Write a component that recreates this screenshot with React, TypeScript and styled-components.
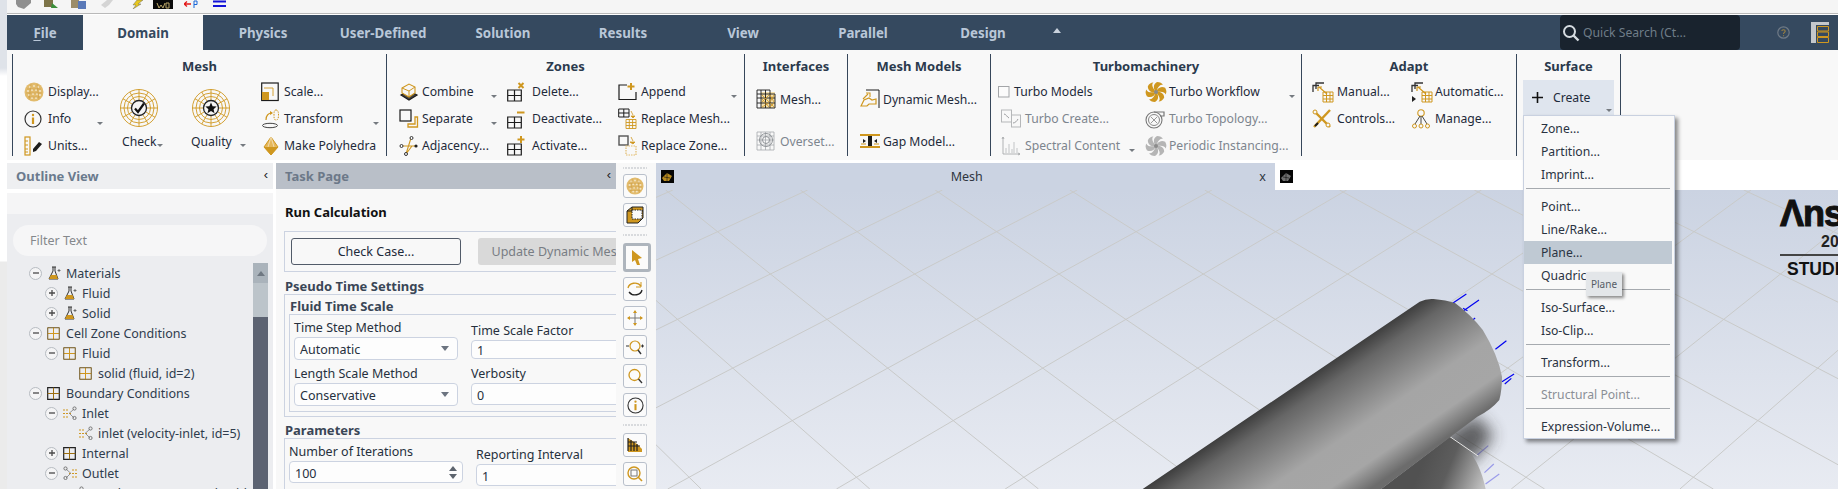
import React from 'react';
import styled, { createGlobalStyle } from 'styled-components';

const GOLD = '#cf971f';
const INK = '#1c1c1c';
const FONT = '"Noto Sans", "Open Sans", "Liberation Sans", sans-serif';

const Global = createGlobalStyle`
  html, body { margin: 0; padding: 0; width: 1838px; height: 489px; overflow: hidden; background: #fff; }
  body { font-family: ${FONT}; }
  #root { width: 1838px; height: 489px; }
`;

const Page = styled.div`
  display: flex; width: 1838px; height: 489px; overflow: hidden; background: #fff;
`;
const Rail = styled.div`
  flex: 0 0 7px;
  background: linear-gradient(180deg, #dfe3e9 0, #dfe3e9 68px, #fff 76px, #fff 261px, #ebebeb 262px, #ebebeb 100%);
`;
const Main = styled.div`
  flex: 1; min-width: 0; display: flex; flex-direction: column;
`;
const QuickBar = styled.div`
  flex: 0 0 13px; height: 13px; background: #f5f5f5; border-bottom: 1px solid #b9b9b9; box-sizing: content-box;
  display: flex; align-items: flex-start; overflow: hidden; padding-left: 9px; gap: 12px; margin-bottom: 1px;
`;
const QuickIcon = styled.svg<{ $ml?: number }>`
  flex: none; margin-left: ${p => p.$ml ?? 0}px;
`;
const TabBar = styled.div`
  flex: 0 0 35px; display: flex; align-items: stretch; background: #35495f;
`;
const Tab = styled.div<{ $active?: boolean; $w?: number }>`
  flex: 0 0 ${p => p.$w ?? 120}px; display: flex; align-items: center; justify-content: center;
  font-size: 13.3px; font-weight: 700; padding-top: ${p => (p.$active ? 0 : 1)}px;
  color: ${p => (p.$active ? '#35495f' : '#b9c7d8')};
  background: ${p => (p.$active ? '#f8f8f8' : 'transparent')};
  u { text-underline-offset: 2px; }
`;
const Collapse = styled.div`
  width: 0; height: 0; margin: 13px 0 0 10px;
  border-left: 4px solid transparent; border-right: 4px solid transparent; border-bottom: 5px solid #c9d2dd;
`;
const Search = styled.div`
  margin-left: 499px; flex: 0 0 180px; background: #19232e; border-radius: 4px;
  display: flex; align-items: center; gap: 3px; padding-left: 2px; box-sizing: border-box;
  font-size: 12.2px; color: #6f7d88;
`;
const TabEnd = styled.div`
  margin-left: 37px; display: flex; align-items: center; gap: 21px;
`;

const Ribbon = styled.div`
  flex: 0 0 110px; height: 110px; box-sizing: border-box; background: #f8f8f8;
  padding: 4px 0 4px 5px; display: flex;
`;
const Group = styled.div<{ $w: number; $last?: boolean }>`
  flex: 0 0 ${p => p.$w}px; min-width: 0; box-sizing: border-box; height: 102px;
  border-left: 1px solid #36465a;
  border-right: ${p => (p.$last ? '1px solid #36465a' : '0')};
  display: flex; flex-direction: column;
`;
const GroupTitle = styled.div`
  flex: 0 0 24px; text-align: center; font-size: 13px; font-weight: 700; color: #2b3a4d; line-height: 24px;
`;
const Cols = styled.div`
  display: flex; align-items: flex-start;
`;
const Col = styled.div<{ $ml: number; $w: number; $row?: number }>`
  flex: 0 0 ${p => p.$w}px; min-width: 0; margin-left: ${p => p.$ml}px; display: flex; flex-direction: column;
  --row: ${p => p.$row ?? 27}px;
`;
const Item = styled.div<{ $off?: boolean }>`
  height: var(--row); display: flex; align-items: center; white-space: nowrap;
  font-size: 12.2px; color: ${p => (p.$off ? '#7d858e' : '#1e2a3a')};
`;
const Slot = styled.span<{ $w?: number; $inset?: number }>`
  flex: 0 0 ${p => p.$w ?? 24}px; padding-left: ${p => p.$inset ?? 0}px; box-sizing: border-box;
  display: flex; align-items: center;
`;
const Caret = styled.span<{ $ml?: number }>`
  margin-left: ${p => (p.$ml !== undefined ? `${p.$ml}px` : 'auto')}; margin-top: 9px; flex: none; width: 0; height: 0;
  border-left: 3.5px solid transparent; border-right: 3.5px solid transparent; border-top: 3.5px solid #757a80;
`;
const Big = styled.div<{ $ml: number }>`
  flex: 0 0 38px; min-width: 0; width: 38px; margin-left: ${p => p.$ml}px; padding-top: 11px; display: flex; flex-direction: column;
`;
const BigLabel = styled.div<{ $ml: number }>`
  margin: 5px 0 0 ${p => p.$ml}px; height: 18px; display: flex; align-items: center; white-space: nowrap;
  font-size: 12.2px; color: #1e2a3a;
`;
const Create = styled.div`
  position: relative; margin: 2px 0 0 6px; flex: 0 0 91px; height: 35px; background: #dfe5ee;
  display: flex; align-items: center; font-size: 12.2px; color: #1e2a3a;
  padding-left: 9px; box-sizing: border-box; gap: 10px;
`;
const CreateCaret = styled.span`
  position: absolute; right: 2px; bottom: 3px; width: 0; height: 0;
  border-left: 3.5px solid transparent; border-right: 3.5px solid transparent; border-top: 3.5px solid #757a80;
`;
const Menu = styled.div`
  position: absolute; left: 0; top: 100%; width: 152px; box-sizing: border-box; z-index: 5;
  background: #f9f9f9; border: 1px solid #c9d1e0; padding-top: 1px;
  box-shadow: 3px 3px 4px rgba(0,0,0,.45);
`;
const MenuItem = styled.div<{ $hi?: boolean; $off?: boolean }>`
  height: 23px; line-height: 23px; padding-left: 17px; margin-right: 2px; font-size: 12.2px;
  color: ${p => (p.$off ? '#8a8f96' : '#2a3342')};
  background: ${p => (p.$hi ? '#bfc9d3' : 'transparent')};
`;
const MenuSep = styled.div`
  height: 1px; margin: 2px 4px 6px 2px; background: #a6aaaf;
`;
const Tip = styled.div`
  position: absolute; left: 62px; top: 156px; width: 36px; height: 24px; line-height: 24px; text-align: center;
  background: #e3e6e9; font-size: 10px; color: #555c66; box-shadow: 2px 2px 3px rgba(0,0,0,.45);
`;

const Workspace = styled.div`
  flex: 1; min-height: 0; margin-top: 3px; display: flex; overflow: hidden;
`;
const Outline = styled.div`
  flex: 0 0 266px; display: flex; flex-direction: column; overflow: hidden;
`;
const PaneHead = styled.div<{ $bg: string; $fg: string }>`
  flex: 0 0 26px; height: 26px; display: flex; align-items: center; justify-content: space-between;
  background: ${p => p.$bg}; color: ${p => p.$fg}; font-size: 13px; font-weight: 700; padding: 0 5px 0 9px;
`;
const Chev = styled.span`
  font-size: 13px; font-weight: 400; color: #222; line-height: 1; margin-top: -4px; font-family: "Liberation Sans", sans-serif;
`;
const HeadGap = styled.div`
  flex: 0 0 4px; background: #fff;
`;
const PaleBand = styled.div`
  flex: 0 0 21px; background: #f5f5f6;
`;
const OutlineBody = styled.div`
  flex: 1; min-height: 0; background: #ecedf0; display: flex; flex-direction: column;
`;
const FilterWrap = styled.div`
  flex: 0 0 49px; padding: 11px 6px 7px; box-sizing: border-box;
`;
const Filter = styled.div`
  height: 31px; border-radius: 16px; background: #f6f6f7; color: #85888c; font-size: 12.5px;
  line-height: 32px; padding-left: 17px;
`;
const TreeWrap = styled.div`
  flex: 1; min-height: 0; display: flex; padding-right: 5px;
`;
const Tree = styled.div`
  flex: 1; min-width: 0; overflow: hidden; padding-top: 0;
`;
const Row = styled.div<{ $lvl: number }>`
  height: 20px; display: flex; align-items: center; padding-left: ${p => 22 + p.$lvl * 16}px; white-space: nowrap;
  font-size: 12.5px; color: #2f3c4d;
`;
const Toggle = styled.span`
  flex: 0 0 13px; width: 13px; height: 13px; box-sizing: border-box; border-radius: 50%; border: 1.5px solid #b7bcc2;
  background: #f4f4f5; margin-right: 5px; display: flex; align-items: center; justify-content: center;
`;
const NodeIcon = styled.span`
  flex: 0 0 19px; display: flex; align-items: center;
`;
const NoToggle = styled.span`
  flex: 0 0 18px;
`;
const Scroll = styled.div`
  flex: 0 0 15px; display: flex; flex-direction: column; background: #5c6372;
`;
const ScrollUp = styled.div`
  flex: 0 0 20px; background: #aab3bb; display: flex; align-items: center; justify-content: center;
`;
const Thumb = styled.div`
  flex: 0 0 34px; background: #bcc4ca;
`;
const Up = styled.span`
  width: 0; height: 0; border-left: 4px solid transparent; border-right: 4px solid transparent; border-bottom: 5px solid #6f7882;
`;

const Task = styled.div`
  flex: 0 0 340px; margin-left: 3px; display: flex; flex-direction: column; background: #f8f8f8; overflow: hidden;
`;
const TaskBody = styled.div`
  flex: 1; padding: 0 0 0 8px; font-size: 12.5px; color: #26303d; overflow: hidden; width: 500px;
`;
const Heading = styled.div`
  font-weight: 700; font-size: 13px; color: #111; height: 18px; line-height: 20px; margin: 13px 0 11px 1px;
`;
const ButtonBox = styled.div`
  height: 41px; box-sizing: border-box; border: 1px solid #ccd3e1; display: flex; align-items: center; gap: 17px; padding-left: 6px;
`;
const CheckBtn = styled.div`
  flex: 0 0 170px; height: 27px; box-sizing: border-box; border: 1px solid #525b69; border-radius: 3px;
  display: flex; align-items: center; justify-content: center; color: #1e2a3a;
`;
const GreyBtn = styled.div`
  flex: 0 0 170px; height: 27px; background: #d9d9d9; border-radius: 3px; color: #787d84;
  display: flex; align-items: center; justify-content: center; white-space: nowrap;
`;
const Sub = styled.div<{ $h: number; $lh: number }>`
  font-weight: 700; font-size: 13px; color: #3a4656; height: ${p => p.$h}px; line-height: ${p => p.$lh}px; margin-left: 1px;
`;
const Frame = styled.div<{ $p?: string }>`
  border: 1px solid #ccd3e1; padding: ${p => p.$p ?? '0'}; box-sizing: border-box;
`;
const FieldGrid = styled.div<{ $c: number }>`
  display: grid; grid-template-columns: ${p => p.$c}px 1fr; column-gap: 13px;
`;
const Field = styled.div<{ $h: number }>`
  display: flex; flex-direction: column; justify-content: flex-end; height: ${p => p.$h}px;
`;
const FieldLabel = styled.div`
  height: 20px; line-height: 22px; white-space: nowrap;
`;
const Input = styled.div<{ $h: number; $mb?: number }>`
  height: ${p => p.$h}px; margin-bottom: ${p => p.$mb ?? 0}px; box-sizing: border-box; border: 1px solid #ccd3e1; border-radius: 4px; background: #fdfdfd;
  display: flex; align-items: center; padding: 2px 5px 0; justify-content: space-between; white-space: nowrap;
`;
const SelArrow = styled.span`
  width: 0; height: 0; margin: -3px 3px 0 0; border-left: 4.5px solid transparent; border-right: 4.5px solid transparent; border-top: 5px solid #6c7480;
`;
const Spin = styled.span`
  display: flex; flex-direction: column; gap: 3px; margin-top: -2px;
  i { display: block; width: 0; height: 0; border-left: 4px solid transparent; border-right: 4px solid transparent; }
  i:first-child { border-bottom: 5px solid #5d646e; }
  i:last-child { border-top: 5px solid #5d646e; }
`;

const ToolStrip = styled.div`
  flex: 0 0 40px; background: #f8f8f8; display: flex; flex-direction: column; align-items: flex-start;
  padding: 3px 0 0 7px; box-sizing: border-box; gap: 5px;
`;
const Dots = styled.div<{ $h?: number }>`
  width: 24px; height: ${p => p.$h ?? 6}px; flex: none;
  background-image: radial-gradient(circle, #b8bcc2 0.6px, transparent 0.7px);
  background-size: 3px 2px; background-position: center; background-repeat: repeat-x;
`;
const ToolBtn = styled.div<{ $on?: boolean }>`
  width: ${p => (p.$on ? 28 : 24)}px; height: ${p => (p.$on ? 29 : 24)}px; box-sizing: border-box;
  border: ${p => (p.$on ? '3px solid #aeb5bd' : '1px solid #b9c0cb')}; border-radius: 3px; background: #fbfbfb;
  display: flex; align-items: center; justify-content: center; flex: none;
`;

const Viewport = styled.div`
  flex: 1; min-width: 0; display: flex; flex-direction: column; position: relative; overflow: hidden;
`;
const ViewHead = styled.div`
  flex: 0 0 27px; display: flex;
`;
const MeshTab = styled.div`
  flex: 0 0 619px; background: #cbd3e2; display: flex; align-items: center; padding: 0 9px 0 5px; box-sizing: border-box;
  font-size: 12.5px; color: #2f3640; justify-content: space-between;
`;
const WhiteTab = styled.div`
  flex: 1; background: #fff; display: flex; align-items: center; padding-left: 5px;
`;
const Scene = styled.svg`
  flex: 1; min-height: 0; display: block; width: 100%;
`;
const Brand = styled.div`
  position: absolute; left: 1124px; top: 36px; width: 70px; font-family: "Liberation Sans", sans-serif; color: #111; font-weight: 700;
`;
const BrandName = styled.div`
  font-size: 36px; line-height: 30px; height: 30px; white-space: nowrap; letter-spacing: -1px;
  -webkit-text-stroke: 1px #111;
`;
const BrandYear = styled.div`
  font-size: 16px; line-height: 18px; height: 18px; padding-left: 41px; margin-top: 4px; white-space: nowrap; color: #222;
`;
const BrandRule = styled.div`
  height: 2px; background: #444; margin-top: 3px;
`;
const BrandStudent = styled.div`
  font-size: 17.5px; line-height: 20px; padding-left: 7px; margin-top: 3px; white-space: nowrap;
`;

/* ---------- icons ---------- */
const Svg: React.FC<{ w?: number; h?: number; vb?: string; children: React.ReactNode }> = ({ w = 20, h = 20, vb, children }) => (
  <svg width={w} height={h} viewBox={vb ?? `0 0 ${w} ${h}`} fill="none">{children}</svg>
);
const Ball = ({ s = 20 }: { s?: number }) => (
  <Svg w={s} h={s} vb="0 0 20 20">
    <circle cx="10" cy="10" r="9.5" fill="#e2bb6c" />
    {[[6,5],[10,4],[14,5],[4,9],[8,8],[12,8],[16,9],[5,13],[9,12],[13,12],[16,13],[8,16],[12,16]].map(([x,y],i)=><circle key={i} cx={x} cy={y} r="1.1" fill="#f3e3c0" />)}
    <path d="M3 7 17 7M2 11H18M4 15H16M7 2 5 18M13 2 15 18" stroke="#c9983d" strokeWidth=".5" />
  </Svg>
);
const Info = ({ s = 18, c = '#333' }: { s?: number; c?: string }) => (
  <Svg w={s} h={s} vb="0 0 18 18">
    <circle cx="9" cy="9" r="8" stroke={c} strokeWidth="1.2" />
    <circle cx="9" cy="5" r="1.2" fill={GOLD} /><path d="M9 7.5V14" stroke={GOLD} strokeWidth="2.2" />
  </Svg>
);
const Units = () => (
  <Svg w={20} h={20}>
    <rect x="1" y="1" width="5" height="18" stroke={GOLD} strokeWidth="1.2" />
    <path d="M1 5H4M1 9H4M1 13H4M1 16H4" stroke={GOLD} />
    <path d="M9 13 15 6 18 8 12 15 9 16Z" fill={INK} />
  </Svg>
);
const Target = ({ star }: { star?: boolean }) => {
  const spokes = Array.from({ length: 12 }, (_, i) => {
    const a = (i * Math.PI) / 6;
    return <line key={i} x1={19 + 8 * Math.cos(a)} y1={19 + 8 * Math.sin(a)} x2={19 + 18.5 * Math.cos(a)} y2={19 + 18.5 * Math.sin(a)} stroke={GOLD} strokeWidth=".9" />;
  });
  return (
    <Svg w={38} h={38}>
      {[18.5, 15, 11.5].map(r => <circle key={r} cx="19" cy="19" r={r} stroke={GOLD} strokeWidth=".9" />)}
      {spokes}
      <circle cx="19" cy="19" r="7.5" fill="#f4f4f4" stroke="#222" strokeWidth="1.3" />
      {star
        ? <path d="M19 13.5 20.6 17.3 24.6 17.6 21.6 20.2 22.5 24.2 19 22.1 15.5 24.2 16.4 20.2 13.4 17.6 17.4 17.3Z" fill="#111" />
        : <path d="M15 19.5 18 23 24 14.5" stroke="#111" strokeWidth="2.2" />}
    </Svg>
  );
};
const Scale = () => (
  <Svg w={18} h={20}>
    <rect x=".7" y="1" width="16.5" height="17.5" stroke={INK} strokeWidth="1.2" />
    <rect x="1" y="10" width="7" height="8" fill={GOLD} />
    <path d="M3 6H12V14" stroke={GOLD} strokeWidth=".9" />
  </Svg>
);
const TransformIco = () => (
  <Svg w={20} h={20}>
    <ellipse cx="9" cy="16.5" rx="7.5" ry="2.2" stroke="#444" strokeWidth="1" />
    <path d="M5 11C5 6 8 4 11 4" stroke={GOLD} strokeWidth="1.2" />
    <path d="M9 2 12 4 9 6Z" fill={GOLD} />
    <path d="M15 1C17 1 17.5 3 17.5 6S17 11 15 11 13 9 13 6 13 1 15 1Z" stroke={GOLD} strokeWidth="1" strokeDasharray="1.5 1" />
  </Svg>
);
const Poly = () => (
  <Svg w={20} h={20}>
    <path d="M10 1 3 11 10 19 17 11Z" fill="#e5b75a" stroke={GOLD} />
    <path d="M3 11H17L10 19Z" fill={GOLD} /><path d="M10 1 7 11M10 1 13 11" stroke="#fff" strokeWidth=".5" />
  </Svg>
);
const Combine = () => (
  <Svg w={20} h={20}>
    <path d="M2 13 10 18 18 13 10 9Z" stroke={INK} strokeWidth="1.2" fill="#444" />
    <path d="M3 6 10 2 16 5V11L10 15 3 11Z" fill="#f7f7f7" stroke={GOLD} strokeWidth="1.1" />
    <path d="M3 6 10 9 16 5M10 9V15" stroke={GOLD} strokeWidth="1" />
  </Svg>
);
const Separate = () => (
  <Svg w={20} h={20}>
    <rect x="1" y="1" width="11" height="11" stroke={INK} strokeWidth="1.2" />
    <path d="M16 8H18.5V18H9V15H16Z" stroke={GOLD} strokeWidth="1.3" />
  </Svg>
);
const Adjacency = () => (
  <Svg w={20} h={20}>
    <path d="M2 10H16M12 2 7 18M7 18 13 10" stroke={GOLD} strokeWidth="1.1" />
    <circle cx="2.5" cy="10" r="1.5" stroke="#333" fill="#fff" /><circle cx="12.5" cy="2" r="1.5" stroke="#333" fill="#fff" /><circle cx="7" cy="18" r="1.5" stroke="#333" fill="#fff" /><circle cx="17" cy="10" r="1.6" fill="#222" />
  </Svg>
);
const GridMark = ({ mark }: { mark: 'x' | '-' | '+' }) => (
  <Svg w={18} h={20}>
    <path d="M.7 8H14.3V19H.7ZM.7 13.5H14.3M7.5 8V19" stroke={INK} strokeWidth="1.2" />
    {mark === 'x' && <path d="M11.5 1 16.5 6M16.5 1 11.5 6" stroke={GOLD} strokeWidth="2" />}
    {mark === '-' && <path d="M10 3.5H17.5" stroke={GOLD} strokeWidth="2" />}
    {mark === '+' && <path d="M14 0V7M10.5 3.5H17.5" stroke={GOLD} strokeWidth="2" />}
  </Svg>
);
const Append = () => (
  <Svg w={20} h={20}>
    <path d="M9 3H1V17.5H18V10" stroke={INK} strokeWidth="1.2" />
    <path d="M13 1V8M9.5 4.5H16.5" stroke={GOLD} strokeWidth="2" />
  </Svg>
);
const ReplaceMesh = () => (
  <Svg w={20} h={22}>
    <path d="M.7 1H11V9H.7ZM.7 5H11M5.8 1V9" stroke={INK} strokeWidth="1" />
    <path d="M13 3 15 7M13 8H17L15 10Z" stroke={GOLD} strokeWidth=".8" fill={GOLD} />
    <path d="M8 11.5H18V20.5H8ZM8 14.5H18M8 17.5H18M11.3 11.5V20.5M14.6 11.5V20.5" stroke={GOLD} strokeWidth=".9" />
  </Svg>
);
const ReplaceZone = () => (
  <Svg w={20} h={22}>
    <rect x="1" y="1" width="9" height="9" stroke="#555" strokeWidth="1.4" />
    <path d="M13 2 15 6M12 7H17L15 9Z" fill={GOLD} stroke={GOLD} strokeWidth=".8" />
    <rect x="8" y="11" width="10" height="9" stroke="#e2bb6c" strokeWidth="1.2" strokeDasharray="1.5 1" />
  </Svg>
);
const MeshIface = () => (
  <Svg w={20} h={20}>
    <rect x="5" y="3" width="14" height="16" fill="#f2dfae" />
    <path d="M1 1H14M1 5H19M1 9H19M1 14H19M1 19H19M1 1V19M5 1V19M9.5 1V19M14 1V19M19 5V19" stroke={INK} strokeWidth=".9" />
    <path d="M6 6 13 13M13 6 6 13M6 10 13 18M14 6 18 13M18 6 14 13M14 14 18 18M18 14 14 18M13 14 6 18" stroke={GOLD} strokeWidth=".8" />
  </Svg>
);
const Overset = () => (
  <Svg w={20} h={20}>
    <path d="M1 1H18M1 5H18M1 9H18M1 14H18M1 19H18M1 1V19M5 1V19M9.5 1V19M14 1V19M18 1V19" stroke="#a5a8ac" strokeWidth=".8" />
    <circle cx="10" cy="9" r="6.5" stroke="#8f9397" strokeWidth="1" /><circle cx="10" cy="9" r="3.5" stroke="#8f9397" strokeWidth="1" />
  </Svg>
);
const DynMesh = () => (
  <Svg w={20} h={20}>
    <path d="M6 1H19V19" stroke={INK} strokeWidth="1" />
    <path d="M1 17 4 11 9 9 12 11 16 10V15H9L7 17Z" stroke={GOLD} strokeWidth="1.2" />
    <path d="M3 10 8 5M6 4H10V8" stroke={GOLD} strokeWidth="1.1" />
  </Svg>
);
const Gap = () => (
  <Svg w={20} h={14}>
    <path d="M0 1H20M0 13H20" stroke={GOLD} strokeWidth="2" />
    <rect x="8" y="2" width="4" height="10" fill={INK} />
    <path d="M3 5 6 7 3 9M17 5 14 7 17 9" fill={INK} />
    <path d="M1 10H6M14 10H19" stroke={GOLD} />
  </Svg>
);
const CheckBox = () => (
  <Svg w={12} h={12}><rect x=".5" y=".5" width="10.5" height="10.5" fill="#fbfbfb" stroke="#a3a5a8" /></Svg>
);
const TurboCreate = () => (
  <Svg w={20} h={20}>
    <rect x=".5" y="1" width="10" height="12" stroke="#b5b7b9" /><rect x="10.5" y="6" width="9" height="12" stroke="#b5b7b9" />
    <path d="M3 5C5 5 6 8 8 9M12 14C14 14 16 12 17 10" stroke="#9b9da0" strokeWidth="1" />
  </Svg>
);
const Spectral = () => (
  <Svg w={20} h={20}>
    <path d="M2 1V18H19M2 1 1 3M2 1 3 3M19 18 17 17M19 18 17 19" stroke="#a8aaad" strokeWidth=".9" />
    <path d="M5 17V12M8 17V8M11 17V13M13 17V6M16 17V12" stroke="#c2c4c6" strokeWidth="1" />
  </Svg>
);
const Fan = ({ c }: { c: string }) => {
  const blade = 'M11 11C8 8 8 3 12 1C15 1 17 2 18 4C15 3 13 6 11 11Z';
  return (
    <Svg w={22} h={22}>
      {[0, 60, 120, 180, 240, 300].map(a => <path key={a} d={blade} fill={c} transform={`rotate(${a} 11 11)`} />)}
      <circle cx="11" cy="11" r="2" fill="#8b8b8b" />
    </Svg>
  );
};
const Topology = () => (
  <Svg w={20} h={20}>
    <circle cx="9" cy="11" r="8" stroke="#777" strokeWidth="1.1" /><circle cx="9" cy="11" r="5.5" stroke="#888" strokeWidth="1" />
    <path d="M6 8 12 14M12 8 6 14" stroke="#999" strokeWidth="1" />
    <path d="M9 3H19V7H15" stroke="#777" strokeWidth="1.2" />
  </Svg>
);
const AdaptIco = ({ mark }: { mark?: boolean }) => (
  <Svg w={22} h={22}>
    <path d="M5 8V2H13M2 11V4.5H8" stroke="#333" strokeWidth="1.3" transform="translate(-1 0)" />
    <path d="M7 6 15 13M6 6H10M6 6V10" stroke={GOLD} strokeWidth="1.2" />
    <path d="M11 11H21V21H11ZM11 14.5H21M11 18H21M14.5 11V21M18 11V21" stroke={GOLD} strokeWidth="1" />
    {mark && <path d="M1 15 5 18 1 21Z" fill="#222" />}
  </Svg>
);
const Controls = () => (
  <Svg w={20} h={20}>
    <path d="M2 2 18 18" stroke={GOLD} strokeWidth="2.4" /><path d="M18 1 2 18" stroke={GOLD} strokeWidth="2.4" />
    <path d="M6 14 3 17" stroke={INK} strokeWidth="2" />
    <circle cx="3" cy="3" r="2" fill="#f8f8f8" stroke={GOLD} /><circle cx="16" cy="16" r="2" fill="#f8f8f8" stroke={GOLD} />
  </Svg>
);
const Manage = () => (
  <Svg w={20} h={20}>
    <circle cx="10" cy="4" r="3.2" stroke={GOLD} strokeWidth="1.1" />
    <path d="M10 7V15M9 7 4 15M11 7 16 15" stroke="#333" strokeWidth=".9" />
    {[3.5, 10, 16.5].map(x => <circle key={x} cx={x} cy="17" r="2" stroke={GOLD} strokeWidth="1" />)}
  </Svg>
);
const Mag = ({ c = '#d5dbe0' }: { c?: string }) => (
  <Svg w={18} h={18}>
    <circle cx="7.5" cy="7.5" r="5.5" stroke={c} strokeWidth="2" /><path d="M11.5 11.5 16.5 16.5" stroke={c} strokeWidth="2.4" />
  </Svg>
);
const HelpIco = () => (
  <Svg w={13} h={13}>
    <circle cx="6.5" cy="6.5" r="5.7" stroke="#6f7a86" strokeWidth="1.2" />
    <path d="M4.8 5C5 3.4 8.2 3.4 8.2 5.2 8.2 6.4 6.5 6.4 6.5 8M6.5 9.2V10.3" stroke="#9b8040" strokeWidth="1.1" />
  </Svg>
);
const PanelIco = () => (
  <Svg w={18} h={21}>
    <rect x="0" y="0" width="18" height="3" fill="#c4c8cc" />
    <rect x="0" y="3" width="5" height="18" fill="#c4c8cc" />
    <path d="M6.5 4.5H17.5V9H6.5ZM6.5 10H17.5V14.5H6.5ZM6.5 15.5H17.5V20.5H6.5Z" stroke={GOLD} />
  </Svg>
);
const TinyGrid = () => (
  <Svg w={13} h={13}>
    <path d="M.7.7H12.3V12.3H.7ZM.7 6.5H12.3M6.5.7V12.3" stroke={GOLD} />
    <path d="M.7.7H12.3V12.3H.7Z" stroke="#555" strokeWidth=".7" />
  </Svg>
);
const Flask = () => (
  <Svg w={15} h={15}>
    <path d="M5 1H9M6 1V5L2 13H11L8 5V1" stroke="#333" strokeWidth="1" />
    <path d="M4 9H9.5L11 13H2Z" fill={GOLD} />
    <path d="M12 3V6M10.5 4.5H13.5" stroke="#555" strokeWidth=".8" />
  </Svg>
);
const Split = ({ flip }: { flip?: boolean }) => (
  <Svg w={14} h={14}>
    <g transform={flip ? 'translate(14 0) scale(-1 1)' : undefined}>
      <path d="M0 4H5M0 7.5H8M0 11H5" stroke={GOLD} strokeDasharray="2 1" />
      <path d="M6 7.5 11 3M7 8 11 12" stroke="#888" strokeWidth=".9" />
      <circle cx="11.5" cy="2.5" r="1.6" stroke="#777" /><circle cx="11.5" cy="12" r="1.6" stroke="#777" />
    </g>
  </Svg>
);
const BoundaryIco = () => (
  <Svg w={13} h={13}>
    <path d="M.7.7H12.3V12.3H.7Z" stroke="#222" strokeWidth="1.2" /><path d="M.7 6.5H12.3M6.5.7V12.3" stroke="#9c6e10" />
  </Svg>
);
const PlusMinus = ({ open }: { open?: boolean }) => (
  <Toggle>
    <Svg w={8} h={8}><path d={open ? 'M1 4H7' : 'M1 4H7M4 1V7'} stroke="#4a4a4a" strokeWidth="1.3" /></Svg>
  </Toggle>
);
const TileIco = ({ tint }: { tint: string }) => (
  <Svg w={13} h={13}>
    <rect width="13" height="13" fill="#050505" />
    <path d="M1 8 6 3 11 6 8 11 3 11Z" fill={tint} /><path d="M3 7 9 8M6 3 6 11" stroke="#111" strokeWidth=".6" />
  </Svg>
);

/* ---------- viewport drawing ---------- */
const SX = (px: number) => 4 + px / 1.823;
const SY = (py: number) => py / 3 - 30;
const gridLines = (() => {
  const out: { x1: number; y1: number; x2: number; y2: number }[] = [];
  const build = (a1: number, b1: number) => {
    const x1 = SX(a1), y1 = SY(215), x2 = SX(b1), y2 = SY(950);
    const m = (x2 - x1) / (y2 - y1);
    out.push({ x1: x1 + m * (0 - y1), y1: 0, x2: x1 + m * (299 - y1), y2: 299 });
  };
  for (let k = -8; k <= 10; k++) build(105 + 254.3 * k, 662 + 305 * k);
  for (let k = -2; k <= 18; k++) build(105 + 254.3 * k, -860 + 305 * k);
  return out;
})();
const arrows: [number, number, number, number, string][] = [
  [1445, 430, 1470, 402, '#0000f0'], [1465, 452, 1493, 420, '#0000f0'], [1464, 445, 1472, 452, '#0000f0'], [1480, 482, 1486, 474, '#0000f0'],
  [1523, 568, 1543, 542, '#0000f0'], [1535, 665, 1557, 642, '#0000f0'], [1540, 672, 1552, 655, '#0000f0'],
  [1490, 885, 1510, 857, '#9a9bea'], [1503, 938, 1520, 912, '#9a9bea'], [1505, 972, 1530, 942, '#9a9bea'],
];

const treeData: { lvl: number; t?: 'o' | 'c'; icon: React.ReactNode; label: string }[] = [
  { lvl: 0, t: 'o', icon: <Flask />, label: 'Materials' },
  { lvl: 1, t: 'c', icon: <Flask />, label: 'Fluid' },
  { lvl: 1, t: 'c', icon: <Flask />, label: 'Solid' },
  { lvl: 0, t: 'o', icon: <TinyGrid />, label: 'Cell Zone Conditions' },
  { lvl: 1, t: 'o', icon: <TinyGrid />, label: 'Fluid' },
  { lvl: 2, icon: <TinyGrid />, label: 'solid (fluid, id=2)' },
  { lvl: 0, t: 'o', icon: <BoundaryIco />, label: 'Boundary Conditions' },
  { lvl: 1, t: 'o', icon: <Split />, label: 'Inlet' },
  { lvl: 2, icon: <Split />, label: 'inlet (velocity-inlet, id=5)' },
  { lvl: 1, t: 'c', icon: <BoundaryIco />, label: 'Internal' },
  { lvl: 1, t: 'o', icon: <Split flip />, label: 'Outlet' },
  { lvl: 2, icon: <Split flip />, label: 'outlet (pressure-outlet, id=6)' },
];

const tabs = ['Physics', 'User-Defined', 'Solution', 'Results', 'View', 'Parallel', 'Design'];

const menuGroups: { label: string; off?: boolean; hi?: boolean }[][] = [
  [{ label: 'Zone...' }, { label: 'Partition...' }, { label: 'Imprint...' }],
  [{ label: 'Point...' }, { label: 'Line/Rake...' }, { label: 'Plane...', hi: true }, { label: 'Quadric...' }],
  [{ label: 'Iso-Surface...' }, { label: 'Iso-Clip...' }],
  [{ label: 'Transform...' }],
  [{ label: 'Structural Point...', off: true }],
  [{ label: 'Expression-Volume...' }],
];

export default function App() {
  return (
    <Page>
      <Global />
      <Rail />
      <Main>
        <QuickBar>
          <QuickIcon width="15" height="9" viewBox="0 0 15 9"><path d="M0 0H15V3L8 9 2 7 0 4Z" fill="#8f8f8f" /></QuickIcon>
          <QuickIcon width="16" height="9" viewBox="0 0 16 9"><path d="M1 0H10V7H1Z" fill="#7d7448" /><path d="M9 3 15 8H8Z" fill="#3b8f3b" /></QuickIcon>
          <QuickIcon width="16" height="9" viewBox="0 0 16 9"><path d="M0 0H8V8H0Z" fill="#9c8d6a" /><rect x="7" y="1" width="8" height="8" fill="#5a79b8" /></QuickIcon>
          <QuickIcon width="13" height="8" viewBox="0 0 13 8" $ml={2}><path d="M0 5 6 0H12L8 5 4 8Z" fill="#d4d4d4" /></QuickIcon>
          <QuickIcon width="13" height="9" viewBox="0 0 13 9" $ml={4}><path d="M7 0H13L8 4H11L3 9 6 5H3Z" fill="#e8c81e" stroke="#555" strokeWidth=".4" /></QuickIcon>
          <QuickIcon width="20" height="9" viewBox="0 0 20 9" $ml={-2}><rect width="20" height="9" fill="#0a0a0a" /><path d="M4 3 6 8 8 5 10 8 12 3M13 3H16V8H13Z" stroke="#bda96a" fill="none" /></QuickIcon>
          <QuickIcon width="14" height="9" viewBox="0 0 14 9" $ml={-1}><path d="M0 4H7M0 4 3 1.5M0 4 3 6.5" stroke="#e21818" strokeWidth="1.3" fill="none" /><path d="M10 8V1H13V4.5H10" stroke="#1866d8" fill="none" /></QuickIcon>
          <QuickIcon width="13" height="9" viewBox="0 0 13 9" $ml={3}><path d="M0 1.5H13M0 6H13" stroke="#1414d8" strokeWidth="2" /></QuickIcon>
        </QuickBar>
        <TabBar>
          <Tab $w={76}><span><u>F</u>ile</span></Tab>
          <Tab $active>Domain</Tab>
          {tabs.map(t => <Tab key={t}>{t}</Tab>)}
          <Collapse />
          <Search><Mag />Quick Search (Ct...</Search>
          <TabEnd><HelpIco /><PanelIco /></TabEnd>
        </TabBar>
        <Ribbon>
          <Group $w={374}>
            <GroupTitle>Mesh</GroupTitle>
            <Cols>
              <Col $ml={11} $w={79}>
                <Item><Slot><Ball /></Slot>Display...</Item>
                <Item><Slot><Info /></Slot>Info<Caret /></Item>
                <Item><Slot><Units /></Slot>Units...</Item>
              </Col>
              <Big $ml={17}><Target /><BigLabel $ml={2}>Check<Caret $ml={1} /></BigLabel></Big>
              <Big $ml={34}><Target star /><BigLabel $ml={-1}>Quality<Caret $ml={8} /></BigLabel></Big>
              <Col $ml={31} $w={118}>
                <Item><Slot $w={23}><Scale /></Slot>Scale...</Item>
                <Item><Slot $w={23}><TransformIco /></Slot>Transform<Caret /></Item>
                <Item><Slot $w={23}><Poly /></Slot>Make Polyhedra</Item>
              </Col>
            </Cols>
          </Group>
          <Group $w={358}>
            <GroupTitle>Zones</GroupTitle>
            <Cols>
              <Col $ml={12} $w={98}>
                <Item><Slot $w={23}><Combine /></Slot>Combine<Caret /></Item>
                <Item><Slot $w={23}><Separate /></Slot>Separate<Caret /></Item>
                <Item><Slot $w={23}><Adjacency /></Slot>Adjacency...</Item>
              </Col>
              <Col $ml={10} $w={102}>
                <Item><Slot $w={25}><GridMark mark="x" /></Slot>Delete...</Item>
                <Item><Slot $w={25}><GridMark mark="-" /></Slot>Deactivate...</Item>
                <Item><Slot $w={25}><GridMark mark="+" /></Slot>Activate...</Item>
              </Col>
              <Col $ml={9} $w={119}>
                <Item><Slot $w={23}><Append /></Slot>Append<Caret /></Item>
                <Item><Slot $w={23}><ReplaceMesh /></Slot>Replace Mesh...</Item>
                <Item><Slot $w={23}><ReplaceZone /></Slot>Replace Zone...</Item>
              </Col>
            </Cols>
          </Group>
          <Group $w={103}>
            <GroupTitle>Interfaces</GroupTitle>
            <Cols>
              <Col $ml={11} $w={85} $row={42}>
                <Item><Slot><MeshIface /></Slot>Mesh...</Item>
                <Item $off><Slot><Overset /></Slot>Overset...</Item>
              </Col>
            </Cols>
          </Group>
          <Group $w={143}>
            <GroupTitle>Mesh Models</GroupTitle>
            <Cols>
              <Col $ml={12} $w={125} $row={42}>
                <Item><Slot $w={23}><DynMesh /></Slot>Dynamic Mesh...</Item>
                <Item><Slot $w={23}><Gap /></Slot>Gap Model...</Item>
              </Col>
            </Cols>
          </Group>
          <Group $w={311}>
            <GroupTitle>Turbomachinery</GroupTitle>
            <Cols>
              <Col $ml={7} $w={137}>
                <Item><Slot $w={16}><CheckBox /></Slot>Turbo Models</Item>
                <Item $off><Slot $w={27} $inset={3}><TurboCreate /></Slot>Turbo Create...</Item>
                <Item $off><Slot $w={27} $inset={3}><Spectral /></Slot>Spectral Content<Caret /></Item>
              </Col>
              <Col $ml={10} $w={150}>
                <Item><Slot><Fan c={GOLD} /></Slot>Turbo Workflow<Caret /></Item>
                <Item $off><Slot><Topology /></Slot>Turbo Topology...</Item>
                <Item $off><Slot><Fan c="#b5b5b5" /></Slot>Periodic Instancing...</Item>
              </Col>
            </Cols>
          </Group>
          <Group $w={215}>
            <GroupTitle>Adapt</GroupTitle>
            <Cols>
              <Col $ml={10} $w={99}>
                <Item><Slot $w={25}><AdaptIco /></Slot>Manual...</Item>
                <Item><Slot $w={25}><Controls /></Slot>Controls...</Item>
              </Col>
              <Col $ml={0} $w={100}>
                <Item><Slot><AdaptIco mark /></Slot>Automatic...</Item>
                <Item><Slot><Manage /></Slot>Manage...</Item>
              </Col>
            </Cols>
          </Group>
          <Group $w={105} $last>
            <GroupTitle>Surface</GroupTitle>
            <Cols>
              <Create>
                <Svg w={11} h={11}><path d="M5.5 0V11M0 5.5H11" stroke="#111" strokeWidth="1.6" /></Svg>
                Create
                <CreateCaret />
                <Menu>
                  {menuGroups.map((g, i) => (
                    <React.Fragment key={i}>
                      {g.map(m => <MenuItem key={m.label} $hi={m.hi} $off={m.off}>{m.label}</MenuItem>)}
                      {i < menuGroups.length - 1 && <MenuSep />}
                    </React.Fragment>
                  ))}
                  <Tip>Plane</Tip>
                </Menu>
              </Create>
            </Cols>
          </Group>
        </Ribbon>
        <Workspace>
          <Outline>
            <PaneHead $bg="#eeeff1" $fg="#6a7a8d">Outline View<Chev>‹</Chev></PaneHead>
            <HeadGap />
            <PaleBand />
            <OutlineBody>
              <FilterWrap><Filter>Filter Text</Filter></FilterWrap>
              <TreeWrap>
                <Tree>
                  {treeData.map((r, i) => (
                    <Row key={i} $lvl={r.lvl}>
                      {r.t ? <PlusMinus open={r.t === 'o'} /> : <NoToggle />}
                      <NodeIcon>{r.icon}</NodeIcon>
                      {r.label}
                    </Row>
                  ))}
                </Tree>
                <Scroll><ScrollUp><Up /></ScrollUp><Thumb /></Scroll>
              </TreeWrap>
            </OutlineBody>
          </Outline>
          <Task>
            <PaneHead $bg="#b9bfc8" $fg="#6c7888">Task Page<Chev>‹</Chev></PaneHead>
            <TaskBody>
              <Heading>Run Calculation</Heading>
              <ButtonBox>
                <CheckBtn>Check Case...</CheckBtn>
                <GreyBtn>Update Dynamic Mesh...</GreyBtn>
              </ButtonBox>
              <Sub $h={22} $lh={28}>Pseudo Time Settings</Sub>
              <Frame $p="0 4px 4px">
                <Sub $h={19} $lh={23}>Fluid Time Scale</Sub>
                <Frame $p="0 4px 5px">
                  <FieldGrid $c={164}>
                    <Field $h={45}><FieldLabel>Time Step Method</FieldLabel><Input $h={23}>Automatic<SelArrow /></Input></Field>
                    <Field $h={45}><FieldLabel>Time Scale Factor</FieldLabel><Input $h={19} $mb={1}>1</Input></Field>
                    <Field $h={46}><FieldLabel>Length Scale Method</FieldLabel><Input $h={23}>Conservative<SelArrow /></Input></Field>
                    <Field $h={46}><FieldLabel>Verbosity</FieldLabel><Input $h={22} $mb={1}>0</Input></Field>
                  </FieldGrid>
                </Frame>
              </Frame>
              <Sub $h={21} $lh={27}>Parameters</Sub>
              <Frame $p="0 4px 4px">
                <FieldGrid $c={174}>
                  <Field $h={47}><FieldLabel>Number of Iterations</FieldLabel><Input $h={22} $mb={3}>100<Spin><i /><i /></Spin></Input></Field>
                  <Field $h={47}><FieldLabel>Reporting Interval</FieldLabel><Input $h={22}>1</Input></Field>
                </FieldGrid>
              </Frame>
            </TaskBody>
          </Task>
          <ToolStrip>
            <Dots $h={3} />
            <ToolBtn><Ball s={18} /></ToolBtn>
            <ToolBtn>
              <Svg w={18} h={18}><path d="M1 5 6 1H17V12L12 17H1Z" fill={GOLD} stroke="#222" /><path d="M6 1V5H17M6 5 1 5" stroke="#222" /><rect x="6" y="4" width="10" height="9" fill="#fbfbfb" stroke="#222" strokeDasharray="1.5 1" /></Svg>
            </ToolBtn>
            <Dots />
            <ToolBtn $on>
              <Svg w={14} h={17}><path d="M2 1 12 9 8 10 10 16 7 16 5 11 2 13Z" fill={GOLD} /></Svg>
            </ToolBtn>
            <ToolBtn>
              <Svg w={18} h={18}><path d="M2 8C3 3 11 1 15 6" stroke={GOLD} strokeWidth="1.3" /><path d="M16 10C15 15 7 17 3 12" stroke="#222" strokeWidth="1.3" /><path d="M15 2V7H10" stroke={GOLD} /></Svg>
            </ToolBtn>
            <ToolBtn>
              <Svg w={18} h={18}><path d="M9 2V16M2 9H16" stroke="#777" strokeWidth="1" /><path d="M9 1 7 4H11ZM9 17 7 14H11ZM1 9 4 7V11ZM17 9 14 7V11Z" fill={GOLD} /></Svg>
            </ToolBtn>
            <ToolBtn>
              <Svg w={20} h={18}><circle cx="10" cy="8" r="5" stroke={GOLD} strokeWidth="1.2" /><path d="M13 12 16 16" stroke="#333" strokeWidth="1.4" /><path d="M1 8H4M16 8H19M17.5 6.5V9.5" stroke="#333" /></Svg>
            </ToolBtn>
            <ToolBtn>
              <Svg w={18} h={18}><circle cx="8.5" cy="8" r="5.5" stroke={GOLD} strokeWidth="1.3" /><path d="M12.5 12 16 16" stroke="#333" strokeWidth="1.4" /></Svg>
            </ToolBtn>
            <ToolBtn><Info s={17} /></ToolBtn>
            <Dots />
            <ToolBtn>
              <Svg w={18} h={18}><path d="M2 2 11 8 16 13V16H2Z" fill={GOLD} /><path d="M2 2V15M5 4V15M8 6V15M11 8V15M2 6H11M2 10H14" stroke="#222" strokeWidth="1.2" /></Svg>
            </ToolBtn>
            <ToolBtn>
              <Svg w={18} h={18}><circle cx="8" cy="8" r="6" stroke={GOLD} strokeWidth="1.4" /><rect x="5" y="5" width="6" height="6" stroke="#777" strokeWidth="1" /><path d="M12 12 16 16" stroke={GOLD} strokeWidth="1.6" /></Svg>
            </ToolBtn>
          </ToolStrip>
          <Viewport>
            <ViewHead>
              <MeshTab><TileIco tint="#b88a1e" />Mesh<span>x</span></MeshTab>
              <WhiteTab><TileIco tint="#6f6f6f" /></WhiteTab>
            </ViewHead>
            <Scene viewBox="0 0 1182 299" preserveAspectRatio="none">
              <defs>
                <linearGradient id="sky" x1="0" y1="0" x2="0" y2="1">
                  <stop offset="0" stopColor="#cbd3e2" /><stop offset="1" stopColor="#e8ebf2" />
                </linearGradient>
                <linearGradient id="cyl" gradientUnits="userSpaceOnUse" x1="763.7" y1="111.7" x2="835" y2="217">
                  <stop offset="0" stopColor="#3f3f3f" /><stop offset=".14" stopColor="#666" /><stop offset=".55" stopColor="#a5a5a5" /><stop offset=".82" stopColor="#a6a6a6" /><stop offset="1" stopColor="#6c6c6c" />
                </linearGradient>
                <linearGradient id="cyl2" gradientUnits="userSpaceOnUse" x1="770" y1="265" x2="830" y2="290">
                  <stop offset="0" stopColor="#515151" /><stop offset=".4" stopColor="#5d5d5d" /><stop offset="1" stopColor="#c2c2c2" />
                </linearGradient>
                <filter id="soft" x="-50%" y="-50%" width="200%" height="200%"><feGaussianBlur stdDeviation="8" /></filter>
              </defs>
              <rect width="1182" height="299" fill="url(#sky)" />
              {gridLines.map((l, i) => <line key={i} x1={l.x1} y1={l.y1} x2={l.x2} y2={l.y2} stroke="#c9cac9" strokeWidth="1" />)}
              {arrows.map(([a, b, c, d, col], i) => <line key={i} x1={SX(a)} y1={SY(b)} x2={SX(c)} y2={SY(d)} stroke={col} strokeWidth="1.2" />)}
              <path d="M780 250 L820 225 L838 245 L815 275Z" fill="#333" opacity=".75" filter="url(#soft)" />
              <path d="M794 246.7 C812 254 824 272 829.6 299 L725 299Z" fill="url(#cyl2)" />
              <path d="M794 246.7 L822 266" stroke="#e6e6e6" strokeWidth="1" fill="none" />
              <path d="M763.7 111.7 Q770 108.5 777.5 109 Q790 110 799.4 113.3 Q815 125 826.8 140 Q842 165 846 186.7 Q846 200 843.3 210 Q835 220 821.3 226.7 L725.3 299 L486.7 299Z" fill="url(#cyl)" />
            </Scene>
            <Brand>
              <BrandName>Λnsys</BrandName>
              <BrandYear>2024 R1</BrandYear>
              <BrandRule />
              <BrandStudent>STUDENT</BrandStudent>
            </Brand>
          </Viewport>
        </Workspace>
      </Main>
    </Page>
  );
}
